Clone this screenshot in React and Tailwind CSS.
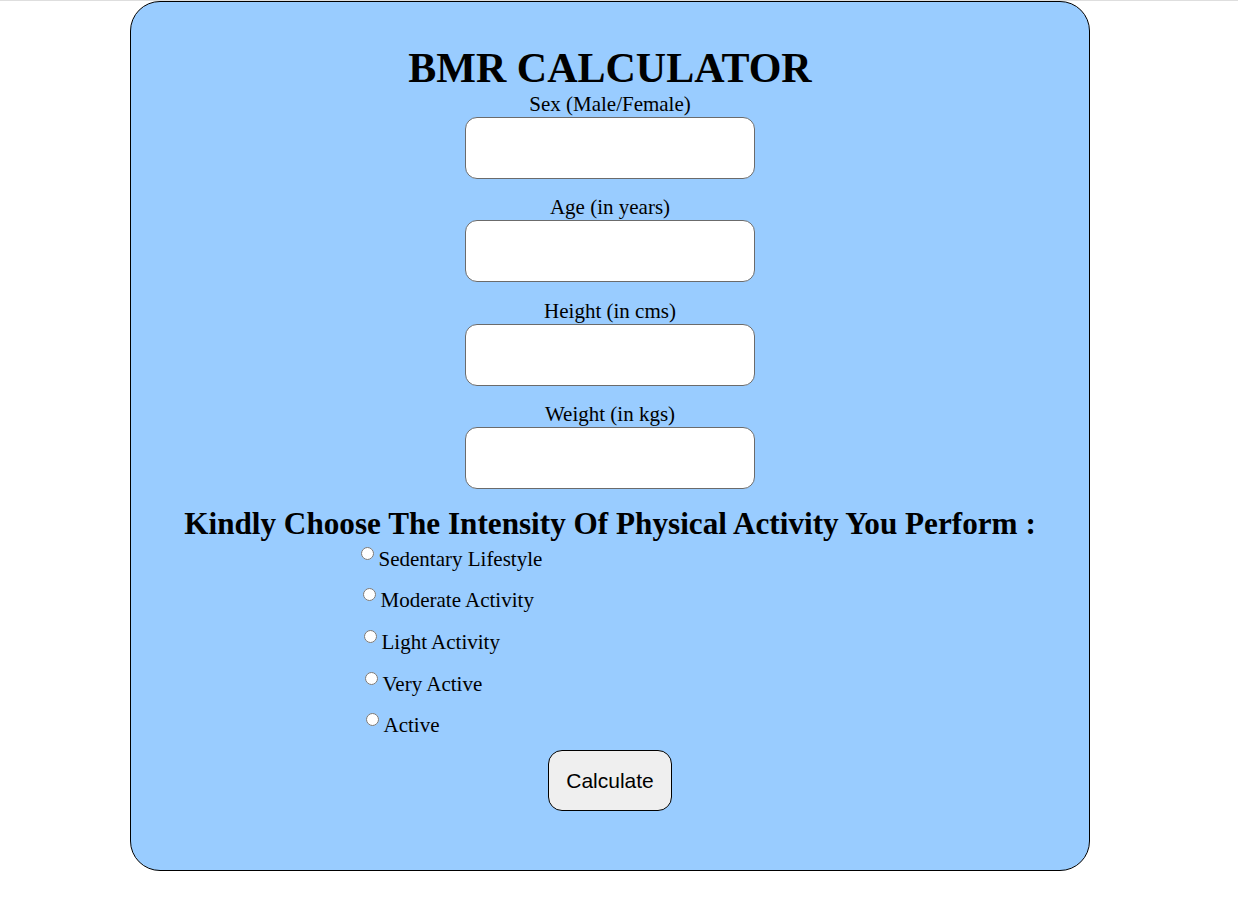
const fields = ['Sex (Male/Female)', 'Age (in years)', 'Height (in cms)', 'Weight (in kgs)'];

const App = () => {
  return (
    <div className="min-h-[918px] bg-white border-t border-[#dedede] font-['Liberation_Serif',serif] text-black">
      <div className="ml-[130px] w-[960px] h-[870px] bg-[#99ccff] border border-black rounded-[30px] flex flex-col items-center pt-[42px]">
        <h1 className="text-[42px] leading-[48px] font-bold">BMR CALCULATOR</h1>

        {/* Inputs */}
        <div className="flex flex-col items-center gap-[16.3px]">
          {fields.map((label) => (
            <div key={label} className="flex flex-col items-center">
              <label className="text-[21px] leading-[24px] mb-[1px]">{label}</label>
              <input
                type="text"
                className="w-[290px] h-[62px] bg-white border border-[#6b6b6b] rounded-[12px] px-2"
              />
            </div>
          ))}
        </div>

        <h2 className="mt-[17px] text-[31.2px] leading-[36px] font-bold">
          Kindly Choose The Intensity Of Physical Activity You Perform :
        </h2>

        {/* Activity options */}
        <div className="self-stretch flex flex-col gap-[17.6px] mt-[5px]">
          <label className="flex items-start ml-[229.5px] text-[21px] leading-[24px]">
            <input type="radio" name="activity" className="w-[13px] h-[13px] mr-[5px]" />
            Sedentary Lifestyle
          </label>
          <label className="flex items-start ml-[231.5px] text-[21px] leading-[24px]">
            <input type="radio" name="activity" className="w-[13px] h-[13px] mr-[5px]" />
            Moderate Activity
          </label>
          <label className="flex items-start ml-[232.5px] text-[21px] leading-[24px]">
            <input type="radio" name="activity" className="w-[13px] h-[13px] mr-[5px]" />
            Light Activity
          </label>
          <label className="flex items-start ml-[233.5px] text-[21px] leading-[24px]">
            <input type="radio" name="activity" className="w-[13px] h-[13px] mr-[5px]" />
            Very Active
          </label>
          <label className="flex items-start ml-[234.5px] text-[21px] leading-[24px]">
            <input type="radio" name="activity" className="w-[13px] h-[13px] mr-[5px]" />
            Active
          </label>
        </div>

        <button className="mt-[13px] w-[124px] h-[61px] bg-[#efefef] border border-black rounded-[14px] font-['Liberation_Sans',Arial,sans-serif] text-[21px]">
          Calculate
        </button>
      </div>
    </div>
  );
};

export default App;
